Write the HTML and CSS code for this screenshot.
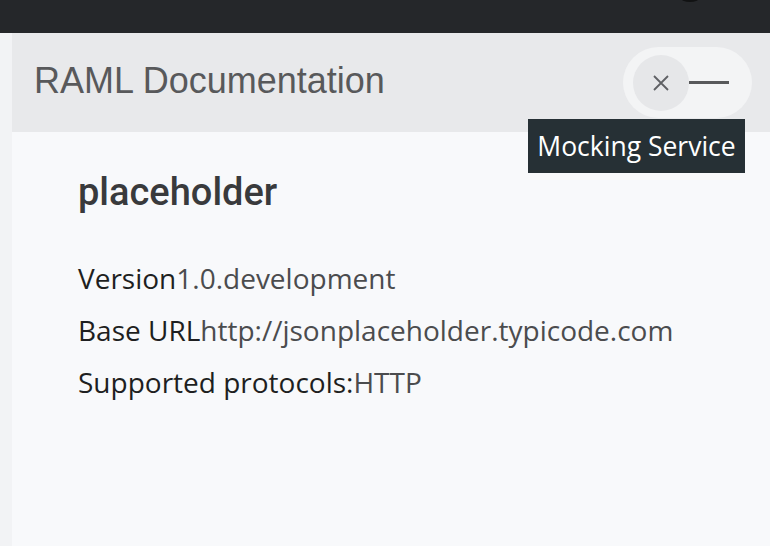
FILE: index.html
```html
<!DOCTYPE html>
<html>
<head>
<meta charset="utf-8">
<link rel="stylesheet" href="styles.css">
</head>
<body>
<div class="topbar"><span class="avatar"></span></div>
<div class="main">
  <div class="gutter"></div>
  <div class="panel">
    <header class="head">
      <h1 class="title">RAML Documentation</h1>
      <div class="toggle">
        <span class="knob">
          <svg width="20" height="20" viewBox="0 0 20 20"><path d="M3 3 L17 17 M17 3 L3 17" stroke="#5f6164" stroke-width="1.8" fill="none"/></svg>
        </span>
        <span class="dash"></span>
      </div>
      <div class="tooltip">Mocking Service</div>
    </header>
    <section class="content">
      <h2 class="api">placeholder</h2>
      <p class="row"><span class="label">Version</span><span class="value">1.0.development</span></p>
      <p class="row"><span class="label">Base URL</span><span class="value">http://jsonplaceholder.typicode.com</span></p>
      <p class="row"><span class="label">Supported protocols:</span><span class="value">HTTP</span></p>
    </section>
  </div>
</div>
</body>
</html>
```
FILE: styles.css
```css
html, body { margin: 0; padding: 0; }
body { width: 770px; height: 546px; overflow: hidden; background: #f8f9fb; font-family: "Open Sans", sans-serif; }
.topbar { height: 33px; background: #25272a; position: relative; }
.avatar { position: absolute; left: 672px; top: -34px; width: 36px; height: 36px; border-radius: 50%; background: #111213; }
.main { display: flex; height: 513px; }
.gutter { width: 12px; background: #f2f3f5; flex: none; }
.panel { flex: 1; display: flex; flex-direction: column; background: #f8f9fb; }
.head { height: 99px; background: #e8e9eb; display: flex; align-items: center; padding-left: 22px; position: relative; }
.title { margin: 0; font-family: "Liberation Sans", Arial, sans-serif; font-weight: 400; font-size: 36px; color: #58595b; letter-spacing: 0; flex: 1; margin-top: -4px; }
.toggle { position: absolute; left: 611px; top: 14px; width: 129px; height: 71px; border-radius: 36px; background: #f3f4f5; display: flex; align-items: center; padding-left: 10px; box-sizing: border-box; }
.knob { width: 56px; height: 56px; border-radius: 50%; background: #e6e7e9; display: flex; align-items: center; justify-content: center; }
.knob svg { display: block; }
.dash { width: 40px; height: 3px; background: #58595b; }
.tooltip { position: absolute; left: 516px; top: 86px; width: 217px; height: 54px; background: #263035; color: #ffffff; font-family: "Open Sans", sans-serif; font-size: 26.5px; display: flex; align-items: center; justify-content: center; box-sizing: border-box; white-space: nowrap; }
.content { padding: 0 0 0 66px; }
.api { margin: 37px 0 0 0; font-family: Roboto, sans-serif; font-weight: 500; font-size: 38px; color: #393a3c; line-height: 46px; }
.row { margin: 0; font-size: 28px; line-height: 52px; }
.row:first-of-type { margin-top: 37px; }
.label { color: #1e1f21; }
.value { color: #4b4c4e; }
```
